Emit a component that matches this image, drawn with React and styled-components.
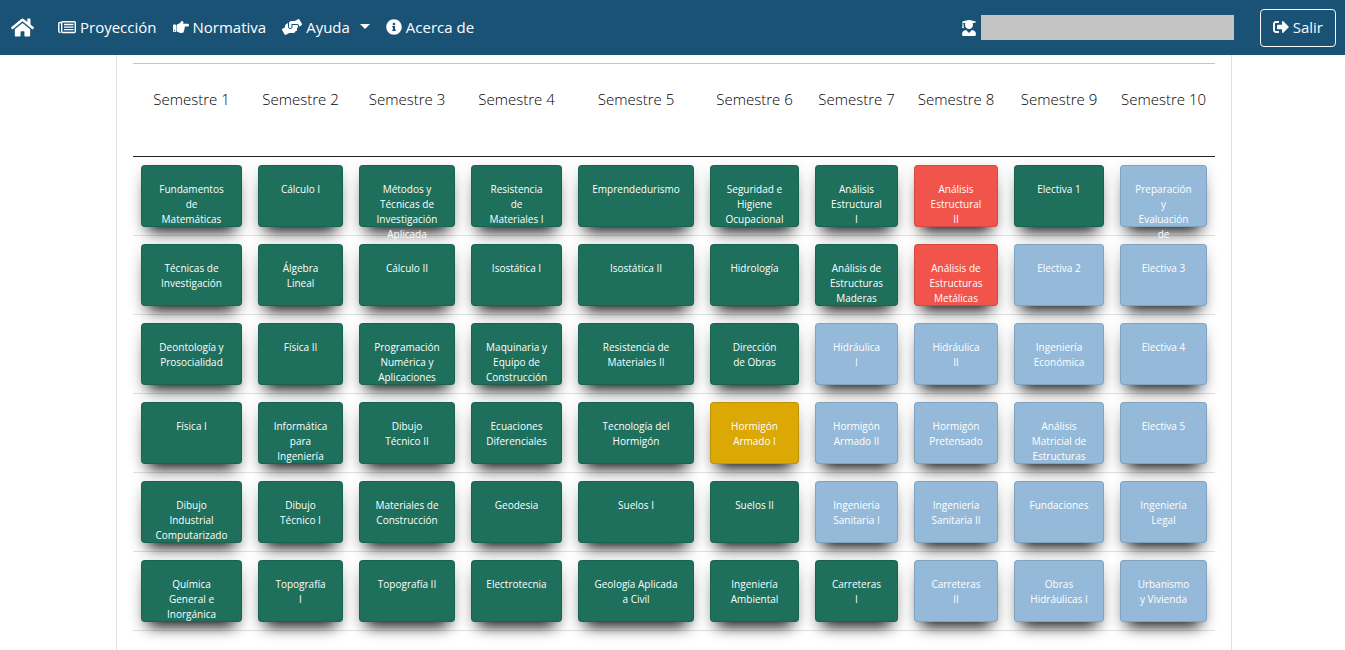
import React from "react"
import styled, { createGlobalStyle } from "styled-components"
import {
  FaHome,
  FaHandPointRight,
  FaHandsHelping,
  FaInfoCircle,
  FaUserGraduate,
  FaSignOutAlt,
} from "react-icons/fa"

const GlobalStyle = createGlobalStyle`
  *, *::before, *::after {
    box-sizing: border-box;
  }

  body {
    margin: 0;
    background: #fff;
    color: #212529;
    font-family: "Segoe UI", "Open Sans", "Noto Sans", sans-serif;
    font-size: 16px;
    line-height: 24px;
  }
`

const Page = styled.div`
  display: flex;
  flex-direction: column;
  height: 100vh;
`

const Navbar = styled.nav`
  display: flex;
  flex-shrink: 0;
  align-items: center;
  height: 55px;
  padding: 0 9px 0 11px;
  background: #1a5276;
  color: #fff;
`

const Brand = styled.a`
  display: flex;
  margin-right: 24px;
  color: inherit;
  font-size: 23px;
`

const NavList = styled.ul`
  display: flex;
  gap: 16px;
  margin: 0;
  padding: 0 0 2px;
  list-style: none;
`

const NavLink = styled.a`
  display: flex;
  align-items: center;
  gap: 4px;
  color: inherit;
  font-size: 15px;
  text-decoration: none;
`

const Caret = styled.span`
  margin-left: 6px;
  border-top: 5px solid;
  border-right: 5px solid transparent;
  border-left: 5px solid transparent;
`

const UserBox = styled.div`
  display: flex;
  align-items: center;
  gap: 4px;
  margin: 0 26px 0 auto;
`

const UserName = styled.div`
  width: 253px;
  height: 25px;
  background: #c4c4c4;
`

const LogoutButton = styled.button`
  display: flex;
  align-items: center;
  gap: 4px;
  height: 38px;
  padding: 0 12px 2px;
  border: 1px solid #f8f9fa;
  border-radius: 4px;
  background: transparent;
  color: #f8f9fa;
  font-family: inherit;
  font-size: 15px;
  cursor: pointer;
`

const Content = styled.main`
  display: flex;
  flex: 1;
  justify-content: center;
  min-height: 0;
  padding-left: 3px;
  overflow: hidden;
`

const Panel = styled.section`
  flex: 0 1 1116px;
  padding: 8px 16px;
  border: 1px solid #dfdfdf;
  border-width: 0 1px;
`

const Table = styled.table`
  width: 100%;
  border-top: 1px solid #c6c6c6;
  border-spacing: 0;
  table-layout: fixed;
`

const HeadCell = styled.th`
  padding: 23px 0 45px;
  border-bottom: 1px solid #212529;
  color: #000;
  font-size: 15px;
  font-weight: 300;
  white-space: nowrap;
`

const Cell = styled.td`
  padding: 8px;
  border-bottom: 1px solid #dee2e6;
`

const colors = {
  done: "#1e705c",
  failed: "#f1544b",
  current: "#dba804",
  pending: "#95bad9",
}

const Course = styled.button`
  display: flex;
  position: relative;
  align-items: flex-start;
  justify-content: center;
  width: 100%;
  height: 62px;
  padding: 16px 0 0;
  border: 1px solid rgba(0, 0, 0, 0.125);
  border-radius: 4px;
  background: ${({ $status }) => colors[$status]};
  background-clip: border-box;
  box-shadow: 0 12px 14px -8px rgba(0, 0, 0, 0.9), 0 4px 14px rgba(0, 0, 0, 0.16);
  color: #fff;
  font-family: inherit;
  font-size: 10px;
  line-height: 15px;
  text-align: center;
  white-space: pre;
  cursor: pointer;
`

// folded page on the left, three text rows on the right
const NewsIcon = () => (
  <svg width="18" height="16" viewBox="0 0 18 16" fill="none" stroke="currentColor" aria-hidden="true">
    <path d="M3.5 3.5H2a1.2 1.2 0 0 0-1.2 1.2v7.1A1.5 1.5 0 0 0 2.5 13.5" strokeWidth="1.4" />
    <rect x="3.7" y="2.7" width="13.6" height="10.8" rx="1" strokeWidth="1.4" />
    <path d="M6 5.5h9.5M6 8.1h9.5M6 10.7h9.5" strokeWidth="1.3" />
  </svg>
)

// relative width of every semester column
const columns = [117, 101, 112, 107, 132, 105, 99, 100, 106, 103]

const links = [
  { label: "Proyección", Icon: NewsIcon },
  { label: "Normativa", Icon: FaHandPointRight, size: 16 },
  { label: "Ayuda", Icon: FaHandsHelping, size: 20, dropdown: true },
  { label: "Acerca de", Icon: FaInfoCircle, size: 16 },
]

// status codes: d = done, f = failed, c = current, p = pending
const statusNames = { d: "done", f: "failed", c: "current", p: "pending" }

const rows = [
  {
    status: "dddddddfdp",
    names: [
      "Fundamentos\nde\nMatemáticas",
      "Cálculo I",
      "Métodos y\nTécnicas de\nInvestigación\nAplicada",
      "Resistencia\nde\nMateriales I",
      "Emprendedurismo",
      "Seguridad e\nHigiene\nOcupacional",
      "Análisis\nEstructural\nI",
      "Análisis\nEstructural\nII",
      "Electiva 1",
      "Preparación\ny\nEvaluación\nde",
    ],
  },
  {
    status: "dddddddfpp",
    names: [
      "Técnicas de\nInvestigación",
      "Álgebra\nLineal",
      "Cálculo II",
      "Isostática I",
      "Isostática II",
      "Hidrología",
      "Análisis de\nEstructuras\nMaderas",
      "Análisis de\nEstructuras\nMetálicas",
      "Electiva 2",
      "Electiva 3",
    ],
  },
  {
    status: "ddddddpppp",
    names: [
      "Deontología y\nProsocialidad",
      "Física II",
      "Programación\nNumérica y\nAplicaciones",
      "Maquinaria y\nEquipo de\nConstrucción",
      "Resistencia de\nMateriales II",
      "Dirección\nde Obras",
      "Hidráulica\nI",
      "Hidráulica\nII",
      "Ingeniería\nEconómica",
      "Electiva 4",
    ],
  },
  {
    status: "dddddcpppp",
    names: [
      "Física I",
      "Informática\npara\nIngeniería",
      "Dibujo\nTécnico II",
      "Ecuaciones\nDiferenciales",
      "Tecnología del\nHormigón",
      "Hormigón\nArmado I",
      "Hormigón\nArmado II",
      "Hormigón\nPretensado",
      "Análisis\nMatricial de\nEstructuras",
      "Electiva 5",
    ],
  },
  {
    status: "ddddddpppp",
    names: [
      "Dibujo\nIndustrial\nComputarizado",
      "Dibujo\nTécnico I",
      "Materiales de\nConstrucción",
      "Geodesia",
      "Suelos I",
      "Suelos II",
      "Ingeniería\nSanitaria I",
      "Ingeniería\nSanitaria II",
      "Fundaciones",
      "Ingeniería\nLegal",
    ],
  },
  {
    status: "dddddddppp",
    names: [
      "Química\nGeneral e\nInorgánica",
      "Topografía\nI",
      "Topografía II",
      "Electrotecnia",
      "Geología Aplicada\na Civil",
      "Ingeniería\nAmbiental",
      "Carreteras\nI",
      "Carreteras\nII",
      "Obras\nHidráulicas I",
      "Urbanismo\ny Vivienda",
    ],
  },
]

const App = () => {
  return (
    <Page>
      <GlobalStyle />
      <Navbar>
        <Brand href="#" aria-label="Inicio">
          <FaHome />
        </Brand>
        <NavList>
          {links.map(({ label, Icon, size, dropdown }) => (
            <li key={label}>
              <NavLink href="#">
                <Icon size={size} />
                {label}
                {dropdown && <Caret />}
              </NavLink>
            </li>
          ))}
        </NavList>
        <UserBox>
          <FaUserGraduate size={16} />
          <UserName />
        </UserBox>
        <LogoutButton type="button">
          <FaSignOutAlt size={16} />
          Salir
        </LogoutButton>
      </Navbar>
      <Content>
        <Panel>
          <Table>
            <colgroup>
              {columns.map((width, i) => (
                <col key={i} width={width} />
              ))}
            </colgroup>
            <thead>
              <tr>
                {columns.map((_, i) => (
                  <HeadCell key={i} scope="col">
                    Semestre {i + 1}
                  </HeadCell>
                ))}
              </tr>
            </thead>
            <tbody>
              {rows.map(({ status, names }, r) => (
                <tr key={r}>
                  {names.map((name, i) => (
                    <Cell key={name}>
                      <Course type="button" $status={statusNames[status[i]]}>
                        {name}
                      </Course>
                    </Cell>
                  ))}
                </tr>
              ))}
            </tbody>
          </Table>
        </Panel>
      </Content>
    </Page>
  )
}

export default App
